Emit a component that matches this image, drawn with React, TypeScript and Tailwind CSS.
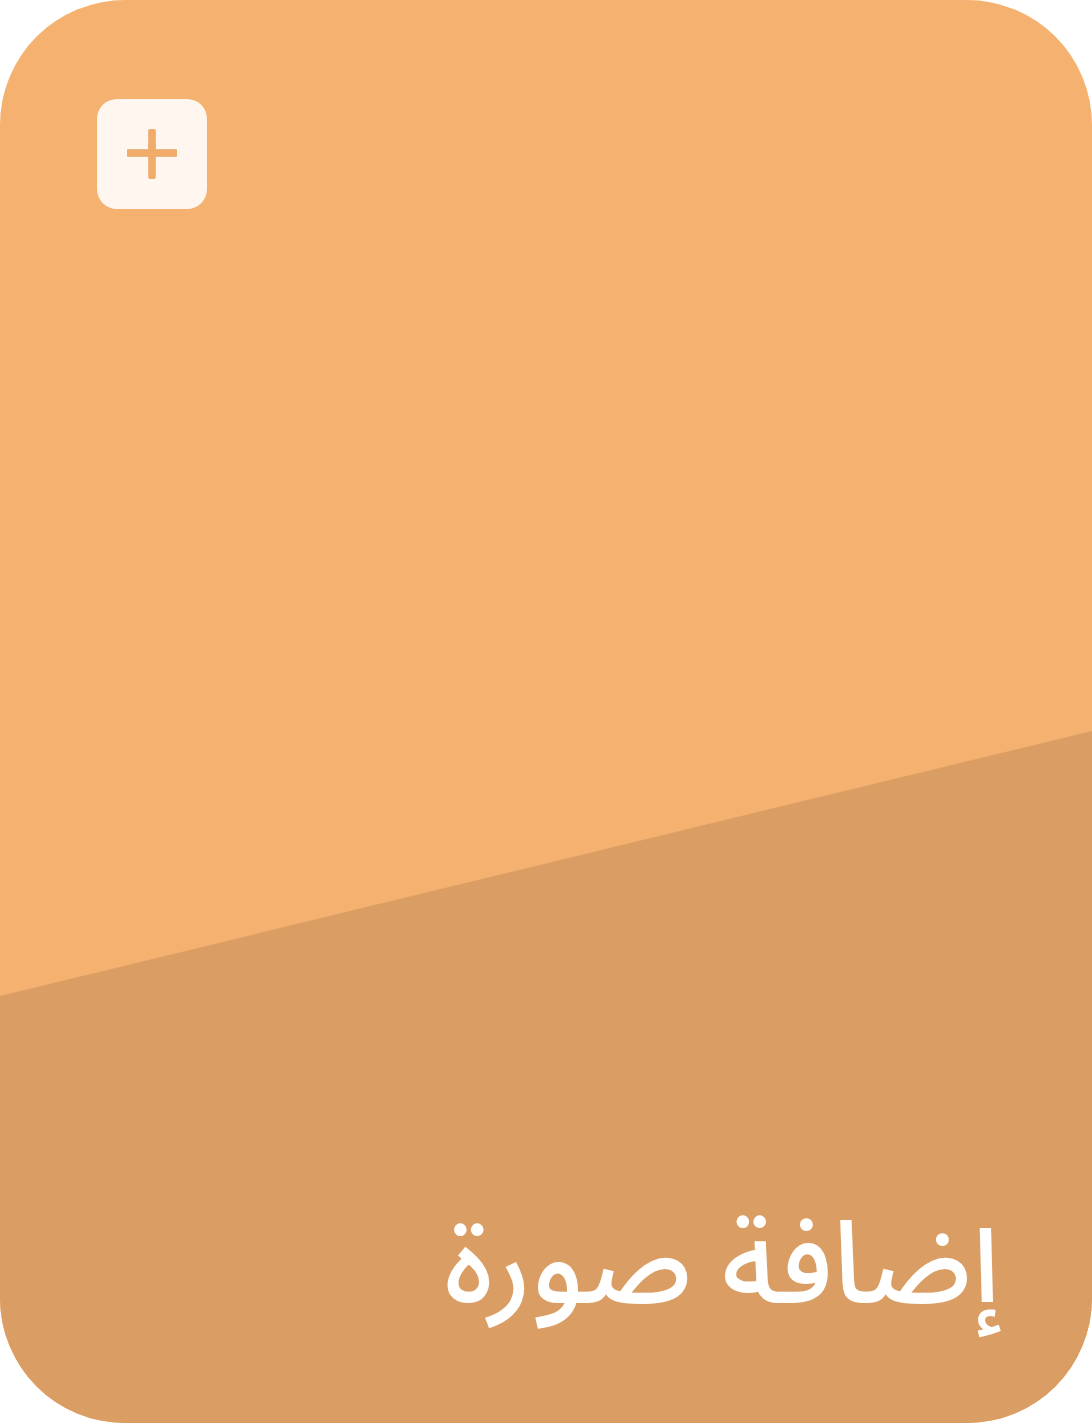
export default function App() {
  return (
    <div className="w-[1092px] h-[1423px] bg-white">
      <div className="relative w-full h-full rounded-[125px] overflow-hidden bg-[#F4B170] flex flex-col justify-between">
        <div className="absolute inset-0 bg-[#DA9D63] [clip-path:polygon(0_996px,100%_731px,100%_100%,0_100%)]" />

        <div className="relative pt-[99px] pl-[97px]">
          <button className="w-[110px] h-[110px] rounded-[20px] bg-[#FEF6EF] flex items-center justify-center">
            <svg width="50" height="50" viewBox="0 0 50 50" fill="none">
              <path d="M25 3v44M2 24h46" stroke="#C98A52" strokeWidth="8" strokeLinecap="round" opacity="0.5" />
              <path d="M25 3v44M2 24h46" stroke="#F2AC6A" strokeWidth="7" strokeLinecap="round" />
            </svg>
          </button>
        </div>

        <div dir="rtl" className="relative pr-[92px] pb-[100px] flex justify-start">
          <span className="text-white text-[114px] leading-none font-medium font-['Noto_Sans_Arabic','Noto_Sans',sans-serif]">
            إضافة صورة
          </span>
        </div>
      </div>
    </div>
  );
}
